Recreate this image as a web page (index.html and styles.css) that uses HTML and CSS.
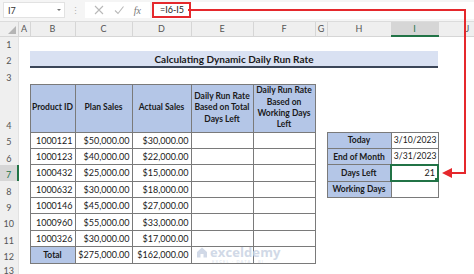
FILE: index.html
```html
<!DOCTYPE html>
<html>
<head>
<meta charset="utf-8">
<link rel="stylesheet" href="styles.css">
</head>
<body>
<div class="app">
  <div class="fbar">
    <div class="namebox"><span class="nb-text">I7</span><span class="dd"></span></div>
    <div class="dots">⋮</div>
    <div class="btns">
      <svg class="ic" width="10" height="10" viewBox="0 0 10 10"><path d="M1 1L9 9M9 1L1 9" stroke="#b9b9b9" stroke-width="1.1" fill="none"/></svg>
      <svg class="ic" width="10" height="10" viewBox="0 0 10 10"><path d="M1 5.5L4 8.5L9.5 1.5" stroke="#b9b9b9" stroke-width="1.1" fill="none"/></svg>
      <span class="fx">fx</span>
    </div>
    <div class="finput"><span class="formula">=I6-I5</span></div>
  </div>
  <table class="sheet">
    <colgroup>
      <col class="c-rh"><col class="c-a"><col class="c-b"><col class="c-c"><col class="c-d"><col class="c-e"><col class="c-f"><col class="c-g"><col class="c-h"><col class="c-i"><col class="c-j">
    </colgroup>
    <tr class="r-colhead">
      <th class="corner"><span class="tri"></span></th>
      <th class="ch">A</th><th class="ch">B</th><th class="ch">C</th><th class="ch">D</th><th class="ch">E</th><th class="ch">F</th><th class="ch">G</th><th class="ch">H</th><th class="ch ch-sel">I</th><th class="ch ch-j">J</th>
    </tr>
    <tr class="r1"><th class="rh">1</th><td></td><td></td><td></td><td></td><td></td><td></td><td></td><td></td><td></td><td></td></tr>
    <tr class="r2"><th class="rh">2</th><td></td><td class="title" colspan="8">Calculating Dynamic Daily Run Rate</td><td></td></tr>
    <tr class="r3"><th class="rh">3</th><td></td><td></td><td></td><td></td><td></td><td></td><td></td><td></td><td></td><td></td></tr>
    <tr class="r4"><th class="rh">4</th><td></td>
      <td class="hd">Product ID</td><td class="hd">Plan Sales</td><td class="hd">Actual Sales</td>
      <td class="hd">Daily Run Rate<br>Based on Total<br>Days Left</td>
      <td class="hd">Daily Run Rate<br>Based on<br>Working Days<br>Left</td>
      <td></td><td></td><td></td><td></td></tr>
    <tr class="rd"><th class="rh">5</th><td></td><td class="num">1000121</td><td class="num">$50,000.00</td><td class="num">$30,000.00</td><td class="cell"></td><td class="cell"></td><td></td><td class="lbl">Today</td><td class="num date">3/10/2023</td><td></td></tr>
    <tr class="rd"><th class="rh">6</th><td></td><td class="num">1000123</td><td class="num">$40,000.00</td><td class="num">$22,000.00</td><td class="cell"></td><td class="cell"></td><td></td><td class="lbl">End of Month</td><td class="num date">3/31/2023</td><td></td></tr>
    <tr class="rd"><th class="rh rh-sel">7</th><td></td><td class="num">1000432</td><td class="num">$25,000.00</td><td class="num">$15,000.00</td><td class="cell"></td><td class="cell"></td><td></td><td class="lbl">Days Left</td><td class="num sel">21<span class="handle"></span></td><td></td></tr>
    <tr class="rd"><th class="rh">8</th><td></td><td class="num">1000632</td><td class="num">$30,000.00</td><td class="num">$18,000.00</td><td class="cell"></td><td class="cell"></td><td></td><td class="lbl">Working Days</td><td class="num"></td><td></td></tr>
    <tr class="rd"><th class="rh">9</th><td></td><td class="num">1000146</td><td class="num">$45,000.00</td><td class="num">$27,000.00</td><td class="cell"></td><td class="cell"></td><td></td><td></td><td></td><td></td></tr>
    <tr class="rd"><th class="rh">10</th><td></td><td class="num">1000960</td><td class="num">$55,000.00</td><td class="num">$33,000.00</td><td class="cell"></td><td class="cell"></td><td></td><td></td><td></td><td></td></tr>
    <tr class="rd"><th class="rh">11</th><td></td><td class="num">1000326</td><td class="num">$30,000.00</td><td class="num">$17,000.00</td><td class="cell"></td><td class="cell"></td><td></td><td></td><td></td><td></td></tr>
    <tr class="rd"><th class="rh">12</th><td></td><td class="lbl">Total</td><td class="num">$275,000.00</td><td class="num">$162,000.00</td><td class="cell"></td><td class="cell"></td><td></td><td></td><td></td><td></td></tr>
    <tr class="r13"><th class="rh">13</th><td></td><td></td><td></td><td></td><td></td><td></td><td></td><td></td><td></td><td></td></tr>
  </table>
  <div class="wm">
    <svg width="12" height="12" viewBox="0 0 12 12"><path d="M1 6L6 1.5L11 6V11.5H7.5V8H4.5V11.5H1Z" fill="#c9d3e3"/></svg>
    <div class="wm-text"><span class="wm-name">exceldemy</span><span class="wm-sub">EXCEL · DATA · BI</span></div>
  </div>
  <svg class="arrow" width="474" height="274" viewBox="0 0 474 274">
    <path d="M188 10H465V173H450" stroke="#e5282c" stroke-width="2" fill="none"/>
    <path d="M442 173L452 168V178Z" fill="#e5282c"/>
  </svg>
</div>
</body>
</html>
```

FILE: styles.css
```css
html, body { margin: 0; padding: 0; background: #fff; }
.app {
  position: relative;
  width: 474px;
  height: 274px;
  overflow: hidden;
  font-family: Lato, "Open Sans", sans-serif;
  color: #222;
}
.fbar {
  height: 22px;
  box-sizing: border-box;
  background: #f5f5f5;
  border-bottom: 1px solid #dcdcdc;
  display: flex;
  align-items: center;
  padding: 2px 0 3px 3px;
}
.namebox {
  width: 62px;
  height: 16px;
  box-sizing: border-box;
  background: #fff;
  border: 1px solid #e2e2e2;
  display: flex;
  align-items: center;
  justify-content: space-between;
  padding: 0 3px 0 4px;
  font-size: 9px;
  color: #333;
}
.dd {
  width: 0; height: 0;
  border-left: 2px solid transparent;
  border-right: 2px solid transparent;
  border-top: 2px solid #777;
}
.dots {
  width: 20px;
  text-align: center;
  color: #b0b0b0;
  font-size: 9px;
}
.btns {
  width: 65px;
  height: 16px;
  box-sizing: border-box;
  background: #fff;
  display: flex;
  align-items: center;
  justify-content: space-around;
  padding: 0 4px;
}
.fx {
  font-family: "Liberation Serif", serif;
  font-style: italic;
  font-size: 10px;
  color: #777;
}
.finput {
  flex: 1;
  height: 17px;
  margin-left: 2px;
  background: #fff;
  display: flex;
  align-items: center;
}
.formula {
  height: 16px;
  box-sizing: border-box;
  border: 2px solid #e5282c;
  padding: 0 5px 0 6px;
  font-size: 9px;
  line-height: 12px;
  color: #222;
}

.sheet {
  border-collapse: collapse;
  table-layout: fixed;
  width: 474px;
  font-size: 9px;
}
.c-rh { width: 18px; }
.c-a { width: 12px; }
.c-b { width: 45px; }
.c-c { width: 57px; }
.c-d { width: 59px; }
.c-e { width: 62px; }
.c-f { width: 62px; }
.c-g { width: 12px; }
.c-h { width: 64px; }
.c-i { width: 47px; }
.c-j { width: 36px; }

td, th { padding: 0; overflow: hidden; white-space: nowrap; }

.r-colhead { height: 14px; }
.r-colhead th {
  background: #efefef;
  font-weight: normal;
  color: #555;
  font-size: 9px;
  border-right: 1px solid #d6d6d6;
  border-bottom: 1px solid #d6d6d6;
}
.r-colhead th.ch-j {
  text-align: left;
  padding-left: 27px;
  border-right: none;
}
.corner { position: relative; }
.tri {
  position: absolute;
  right: 2px;
  bottom: 2px;
  width: 0; height: 0;
  border-left: 8px solid transparent;
  border-bottom: 8px solid #b5b5b5;
}
.ch-sel.ch {
  background: #d6d6d6;
  color: #217346;
  border-bottom: 2px solid #217346;
}
.rh {
  background: #efefef;
  font-weight: normal;
  color: #555;
  font-size: 9px;
  vertical-align: bottom;
  text-align: center;
  border-right: 1px solid #e2e2e2;
  padding-bottom: 1px;
}
.rh.rh-sel {
  background: #d6d6d6;
  color: #217346;
  border-right: 2px solid #217346;
}
.r1 { height: 15px; }
.r2 { height: 16px; }
.r3 { height: 17px; }
.r4 { height: 48px; }
.rd { height: 16.4px; }
.r13 { height: 14px; }

.title {
  background: #d9e1f2;
  border-bottom: 2px solid #3b4658;
  text-align: center;
  font-weight: bold;
  font-size: 10px;
  color: #1a1a1a;
}
.hd {
  background: #b4c6e7;
  border: 1px solid #7a7a7a;
  text-align: center;
  vertical-align: middle;
  font-weight: bold;
  font-size: 8.5px;
  line-height: 11.3px;
  color: #1a1a1a;
}
.num {
  border: 1px solid #7a7a7a;
  text-align: right;
  padding-right: 2px;
  vertical-align: middle;
  color: #1a1a1a;
}
.num.date {
  font-size: 8.6px;
  padding-right: 1px;
}
.cell { border: 1px solid #7a7a7a; }
.lbl {
  background: #b4c6e7;
  border: 1px solid #7a7a7a;
  text-align: center;
  font-weight: bold;
  font-size: 8.5px;
  color: #1a1a1a;
}
.sel {
  position: relative;
  border: 2px solid #217346;
}
.handle {
  position: absolute;
  right: -2px;
  bottom: -2px;
  width: 4px;
  height: 4px;
  background: #217346;
}

.wm {
  position: absolute;
  left: 196px;
  top: 246px;
  display: flex;
  align-items: flex-start;
  gap: 2px;
  opacity: 0.85;
}
.wm-text { display: flex; flex-direction: column; }
.wm-name {
  font-family: "Open Sans", sans-serif;
  font-weight: bold;
  font-size: 13px;
  line-height: 13px;
  color: #c9d3e3;
  letter-spacing: 0.1px;
}
.wm-sub {
  font-size: 4px;
  line-height: 5px;
  color: #d3dbe8;
  letter-spacing: 1.2px;
  padding-left: 2px;
}
.arrow {
  position: absolute;
  left: 0;
  top: 0;
  pointer-events: none;
}
```
